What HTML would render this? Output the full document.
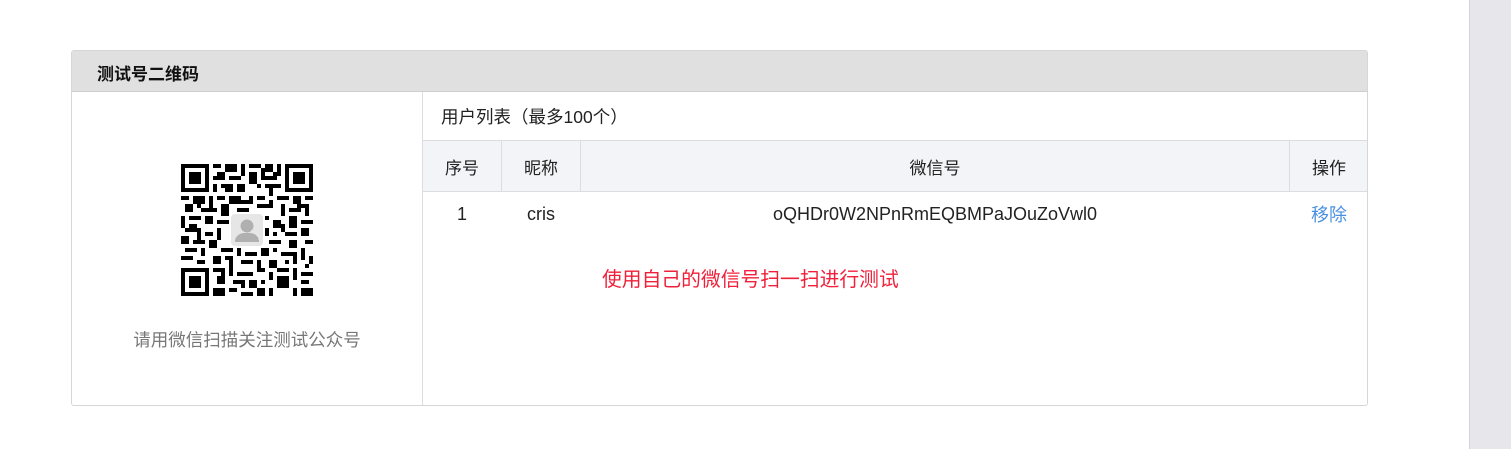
<!DOCTYPE html>
<html><head><meta charset="utf-8"><style>
*{margin:0;padding:0;box-sizing:border-box}
body{width:1511px;height:449px;background:#fff;position:relative;overflow:hidden;font-family:"Liberation Sans","Noto Sans CJK SC",sans-serif;font-size:17px;color:#222}
.a{position:absolute}
.c{display:flex;align-items:center;justify-content:center}
</style></head><body>
<div class="a" style="left:1469px;top:0;width:42px;height:449px;background:#e7e7eb;border-left:1px solid #d4d4d8"></div>
<div class="a" style="left:71px;top:50px;width:1297px;height:356px;border:1px solid #d6d6d6;border-radius:3px;overflow:hidden">
 <div class="a" style="left:0;top:0;width:1297px;height:41px;background:#e0e0e0;border-bottom:1px solid #cfcfcf"></div>
 <div class="a" style="left:25px;top:9px;font-size:17px;font-weight:bold;color:#111">测试号二维码</div>
 <div class="a" style="left:350px;top:41px;width:1px;height:320px;background:#ddd"></div>
 <div class="a" style="left:369px;top:53px;font-size:17.5px;color:#222">用户列表（最多100个）</div>
 <div class="a" style="left:351px;top:89px;width:946px;height:52px;background:#f3f4f8;border-top:1px solid #ddd;border-bottom:1px solid #ddd"></div>
 <div class="a" style="left:429px;top:90px;width:1px;height:50px;background:#ddd"></div>
 <div class="a" style="left:508px;top:90px;width:1px;height:50px;background:#ddd"></div>
 <div class="a" style="left:1217px;top:90px;width:1px;height:50px;background:#ddd"></div>
 <div class="a c" style="left:351px;top:90px;width:78px;height:50px">序号</div>
 <div class="a c" style="left:430px;top:90px;width:78px;height:50px">昵称</div>
 <div class="a c" style="left:509px;top:90px;width:708px;height:50px">微信号</div>
 <div class="a c" style="left:1218px;top:90px;width:78px;height:50px">操作</div>
 <div class="a c" style="left:351px;top:151px;width:78px;height:24px;font-size:18px">1</div>
 <div class="a c" style="left:430px;top:151px;width:78px;height:24px;font-size:18px">cris</div>
 <div class="a c" style="left:509px;top:151px;width:708px;height:24px;font-size:18px">oQHDr0W2NPnRmEQBMPaJOuZoVwl0</div>
 <div class="a c" style="left:1218px;top:151px;width:78px;height:24px;color:#4a90e2;font-size:18px">移除</div>
 <div class="a" style="left:530px;top:212px;color:#f0203a;font-size:19.8px">使用自己的微信号扫一扫进行测试</div>
 <div class="a c" style="left:0;top:276px;width:350px;height:24px;color:#777;font-size:17.5px">请用微信扫描关注测试公众号</div>
</div>
<svg class="a" style="left:181px;top:164px" width="132" height="132" viewBox="0 0 33 33" shape-rendering="crispEdges">
<g fill="#000">
<path d="M0 0h7v7h-7zM1 1v5h5v-5zM2 2h3v3h-3z" fill-rule="evenodd"/>
<path d="M26 0h7v7h-7zM27 1v5h5v-5zM28 2h3v3h-3z" fill-rule="evenodd"/>
<path d="M0 26h7v7h-7zM1 27v5h5v-5zM2 28h3v3h-3z" fill-rule="evenodd"/>
<path d="M8 0h2v1h-2zM11 0h3v2h-3zM15 0h1v3h-1zM17 0h3v1h-3zM21 0h2v2h-2zM24 0h1v3h-1zM9 2h2v2h-2zM12 3h3v1h-3zM17 2h2v3h-2zM20 3h3v1h-3zM8 5h1v2h-1zM10 5h3v1h-3zM14 5h2v2h-2zM19 5h1v1h-1zM21 5h4v1h-4zM11 6h2v1h-2zM22 6h1v2h-1zM8 3h1v1h-1zM13 1h1v1h-1zM20 1h1v2h-1zM23 2h1v2h-1z"/>
<path d="M0 8h2v1h-2zM3 8h3v2h-3zM7 8h1v3h-1zM9 8h2v1h-2zM12 8h3v2h-3zM17 8h1v2h-1zM19 8h2v1h-2zM24 8h3v1h-3zM28 8h2v2h-2zM31 8h2v1h-2zM1 10h2v2h-2zM5 11h4v1h-4zM10 10h2v3h-2zM14 11h3v1h-3zM19 10h4v1h-4zM25 10h1v3h-1zM27 11h3v1h-3zM31 10h1v3h-1zM4 9h1v2h-1zM15 9h2v1h-2zM22 9h1v1h-1zM29 10h2v1h-2z"/>
<path d="M0 13h1v3h-1zM2 13h3v1h-3zM6 13h2v2h-2zM9 14h3v1h-3zM13 13h1v1h-1zM20 13h2v1h-2zM23 14h2v2h-2zM27 13h2v3h-2zM30 14h3v1h-3zM1 16h4v1h-4zM6 17h2v1h-2zM9 16h1v3h-1zM23 17h1v1h-1zM26 17h3v1h-3zM30 16h2v2h-2zM0 18h2v2h-2zM3 19h3v1h-3zM7 19h2v2h-2zM22 19h3v1h-3zM27 19h2v2h-2zM31 19h2v1h-2zM2 15h2v1h-2zM4 17h1v2h-1zM25 15h1v2h-1zM21 16h1v2h-1z"/>
<path d="M1 21h3v1h-3zM5 21h1v2h-1zM10 21h3v1h-3zM14 21h1v2h-1zM16 22h3v1h-3zM20 21h2v2h-2zM23 21h1v1h-1zM25 22h4v1h-4zM30 21h1v3h-1zM0 23h3v1h-3zM8 23h2v2h-2zM11 23h2v1h-2zM15 24h3v1h-3zM19 24h1v2h-1zM22 24h2v2h-2zM26 24h1v1h-1zM32 23h1v2h-1zM4 24h2v1h-2zM12 24h1v2h-1zM28 23h1v2h-1z"/>
<path d="M8 26h3v1h-3zM12 26h1v2h-1zM14 27h4v1h-4zM19 26h2v1h-2zM22 27h1v2h-1zM24 26h3v1h-3zM28 26h1v3h-1zM30 27h3v1h-3zM9 28h2v2h-2zM13 29h3v1h-3zM17 29h2v2h-2zM20 29h1v1h-1zM24 28h3v3h-3zM25 29h1v1h-1zM30 29h2v1h-2zM8 31h3v2h-3zM12 31h2v1h-2zM15 32h3v1h-3zM19 31h2v2h-2zM22 31h1v2h-1zM28 31h1v2h-1zM30 31h3v2h-3zM15 30h1v1h-1zM10 27h1v1h-1zM31 25h1v1h-1z"/>
</g>
<rect x="12" y="12" width="9" height="9" rx="1" fill="#fff"/>
<rect x="12.5" y="12.5" width="8" height="8" rx="1" fill="#e6e6e6"/>
<circle cx="16.5" cy="15.5" r="1.6" fill="#b0b0b0"/>
<path d="M13.5 19.5q0-2.3 3-2.3t3 2.3z" fill="#b0b0b0"/>
</svg>
</body></html>
